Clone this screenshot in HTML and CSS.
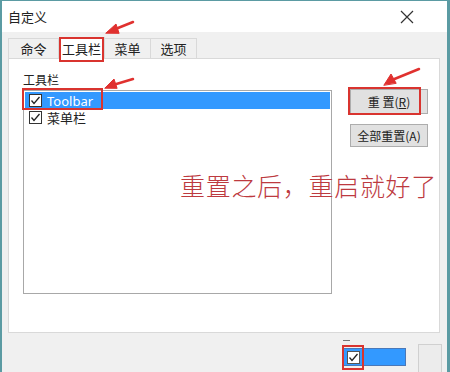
FILE: index.html
```html
<!DOCTYPE html>
<html>
    <head>
        <title>自定义</title>
        <link rel="stylesheet" href="styles.css">
    </head>
    <body>
        <div class="window">
            <div class="titlebar">
                <span class="title">自定义</span>
                <svg class="close" width="14" height="14" viewBox="0 0 14 14">
                    <path d="M1 1 L13 13 M13 1 L1 13" stroke="#333" stroke-width="1.2" fill="none"/>
                </svg>
            </div>
            <div class="content">
                <div class="tabs">
                    <div class="tab tab1">命令</div>
                    <div class="tab active">工具栏</div>
                    <div class="tab">菜单</div>
                    <div class="tab">选项</div>
                </div>
                <div class="panel">
                    <div class="left">
                        <div class="label">工具栏</div>
                        <div class="listbox">
                            <div class="row selected">
                                <svg class="check" width="13" height="13" viewBox="0 0 13 13">
                                    <rect x="0.5" y="0.5" width="12" height="12" fill="#fff" stroke="#333"/>
                                    <path d="M2.5 6.5 L5 9.5 L10.5 3" stroke="#222" stroke-width="1.3" fill="none"/>
                                </svg>
                                <span class="rowText">Toolbar</span>
                            </div>
                            <div class="row">
                                <svg class="check" width="13" height="13" viewBox="0 0 13 13">
                                    <rect x="0.5" y="0.5" width="12" height="12" fill="#fff" stroke="#333"/>
                                    <path d="M2.5 6.5 L5 9.5 L10.5 3" stroke="#222" stroke-width="1.3" fill="none"/>
                                </svg>
                                <span class="rowText">菜单栏</span>
                            </div>
                        </div>
                    </div>
                    <div class="right">
                        <button class="button first">重 置(<u>R</u>)</button>
                        <button class="button">全部重置(A)</button>
                    </div>
                </div>
                <div class="footer">
                    <div class="footGroup">
                        <div class="dash"></div>
                        <div class="field">
                            <svg width="13" height="13" viewBox="0 0 13 13">
                                <rect x="0.5" y="0.5" width="12" height="12" fill="#fff" stroke="#555"/>
                                <path d="M2.5 6.5 L5 9.5 L10.5 3" stroke="#222" stroke-width="1.3" fill="none"/>
                            </svg>
                        </div>
                    </div>
                    <div class="footButton"></div>
                </div>
            </div>

            <!-- annotations drawn over the screenshot -->
            <div class="mark markTab"></div>
            <div class="mark markRow"></div>
            <div class="mark markButton"></div>
            <div class="mark markFoot"></div>
            <div class="note">重置之后，重启就好了</div>
            <svg class="arrows" width="450" height="372" viewBox="0 0 450 372">
                <g stroke="#e0312f" stroke-width="2.5" fill="#e0312f" stroke-linecap="round">
                    <line x1="133" y1="22" x2="113" y2="30"/>
                    <polygon points="106,33 116,24 119,33" stroke-width="1"/>
                    <line x1="133" y1="79" x2="113" y2="85"/>
                    <polygon points="105,88 114,79 117,88" stroke-width="1"/>
                    <line x1="419" y1="69" x2="392" y2="80"/>
                    <polygon points="384,85 391,74 396,83" stroke-width="1"/>
                </g>
            </svg>
        </div>
    </body>
</html>
```

FILE: styles.css
```css
body {
    margin: 0;
    font-family: "Noto Sans CJK SC", "Noto Sans", sans-serif;
}

.window {
    position: relative;
    width: 445px;
    height: 371px;
    border-top: 1px solid #5b9ba3;
    border-left: 2px solid #5b9ba3;
    border-right: 3px solid #5b9ba3;
    background-color: #f0f0f0;
    overflow: hidden;
}

.titlebar {
    height: 31px;
    background-color: #fff;
    display: flex;
    align-items: center;
    padding-left: 6px;
}

.title {
    font-size: 13px;
    color: #222;
}

.close {
    margin-left: auto;
    margin-right: 33px;
}

.content {
    padding: 0 7px 0 6px;
}

.tabs {
    display: flex;
    align-items: flex-end;
    height: 26px;
}

.tab {
    height: 20px;
    line-height: 19px;
    font-size: 13px;
    color: #222;
    border: 1px solid #d9d9d9;
    border-bottom: none;
    border-left: none;
    box-sizing: border-box;
    width: 46px;
    text-align: center;
    background-color: #f0f0f0;
}

.tab1 {
    width: 51px;
    border-left: 1px solid #d9d9d9;
}

.tab.active {
    height: 22px;
    line-height: 22px;
    background-color: #fff;
    width: 46px;
    margin-bottom: -1px;
    position: relative;
}

.panel {
    height: 275px;
    box-sizing: border-box;
    background-color: #fff;
    border: 1px solid #d9d9d9;
    display: flex;
    padding: 12px 0 0 14px;
}

.label {
    font-size: 12px;
    color: #222;
    height: 19px;
}

.listbox {
    width: 309px;
    height: 204px;
    box-sizing: border-box;
    border: 1px solid #a8a8a8;
    padding: 1px;
}

.row {
    height: 17px;
    display: flex;
    align-items: center;
    padding-left: 4px;
    font-size: 13px;
    color: #222;
}

.row.selected {
    background-color: #3399ff;
    color: #fff;
}

.rowText {
    margin-left: 5px;
    font-family: "Noto Sans CJK SC", sans-serif;
}

.row.selected .rowText {
    font-family: "Noto Sans", sans-serif;
}

.right {
    display: flex;
    flex-direction: column;
    gap: 10px;
    margin-left: 18px;
    padding-top: 18px;
}

.button {
    width: 78px;
    height: 23px;
    background-color: #e1e1e1;
    border: 1px solid #adadad;
    font-family: "Noto Sans CJK SC", sans-serif;
    font-size: 12px;
    color: #222;
    padding: 0;
}

.button.first {
    height: 25px;
}

.footer {
    height: 39px;
    display: flex;
    align-items: flex-end;
    justify-content: flex-end;
    margin-right: -2px;
}

.footGroup {
    display: flex;
    flex-direction: column;
    margin-right: 12px;
}

.dash {
    width: 7px;
    height: 1px;
    background-color: #777;
    margin: 0 0 7px 0;
}

.field {
    width: 63px;
    height: 18px;
    box-sizing: border-box;
    background-color: #3399ff;
    border: 1px solid #4a78b8;
    display: flex;
    align-items: center;
    padding-left: 3px;
    margin-bottom: 6px;
}

.footButton {
    width: 22px;
    height: 27px;
    border: 1px solid #d0d0d0;
    border-bottom: none;
    background-color: #ececec;
}

.mark {
    position: absolute;
    border: 2px solid #d9342f;
    box-sizing: border-box;
}

.markTab {
    left: 57px;
    top: 36px;
    width: 45px;
    height: 25px;
}

.markRow {
    left: 20px;
    top: 87px;
    width: 81px;
    height: 22px;
}

.markButton {
    left: 346px;
    top: 86px;
    width: 73px;
    height: 28px;
}

.markFoot {
    left: 340px;
    top: 344px;
    width: 22px;
    height: 25px;
}

.note {
    position: absolute;
    left: 178px;
    top: 166px;
    font-size: 25px;
    letter-spacing: 0.7px;
    color: #bd3a3f;
    font-family: "Noto Sans CJK SC", serif;
    font-weight: 300;
}

.arrows {
    position: absolute;
    left: -2px;
    top: -1px;
}
```
